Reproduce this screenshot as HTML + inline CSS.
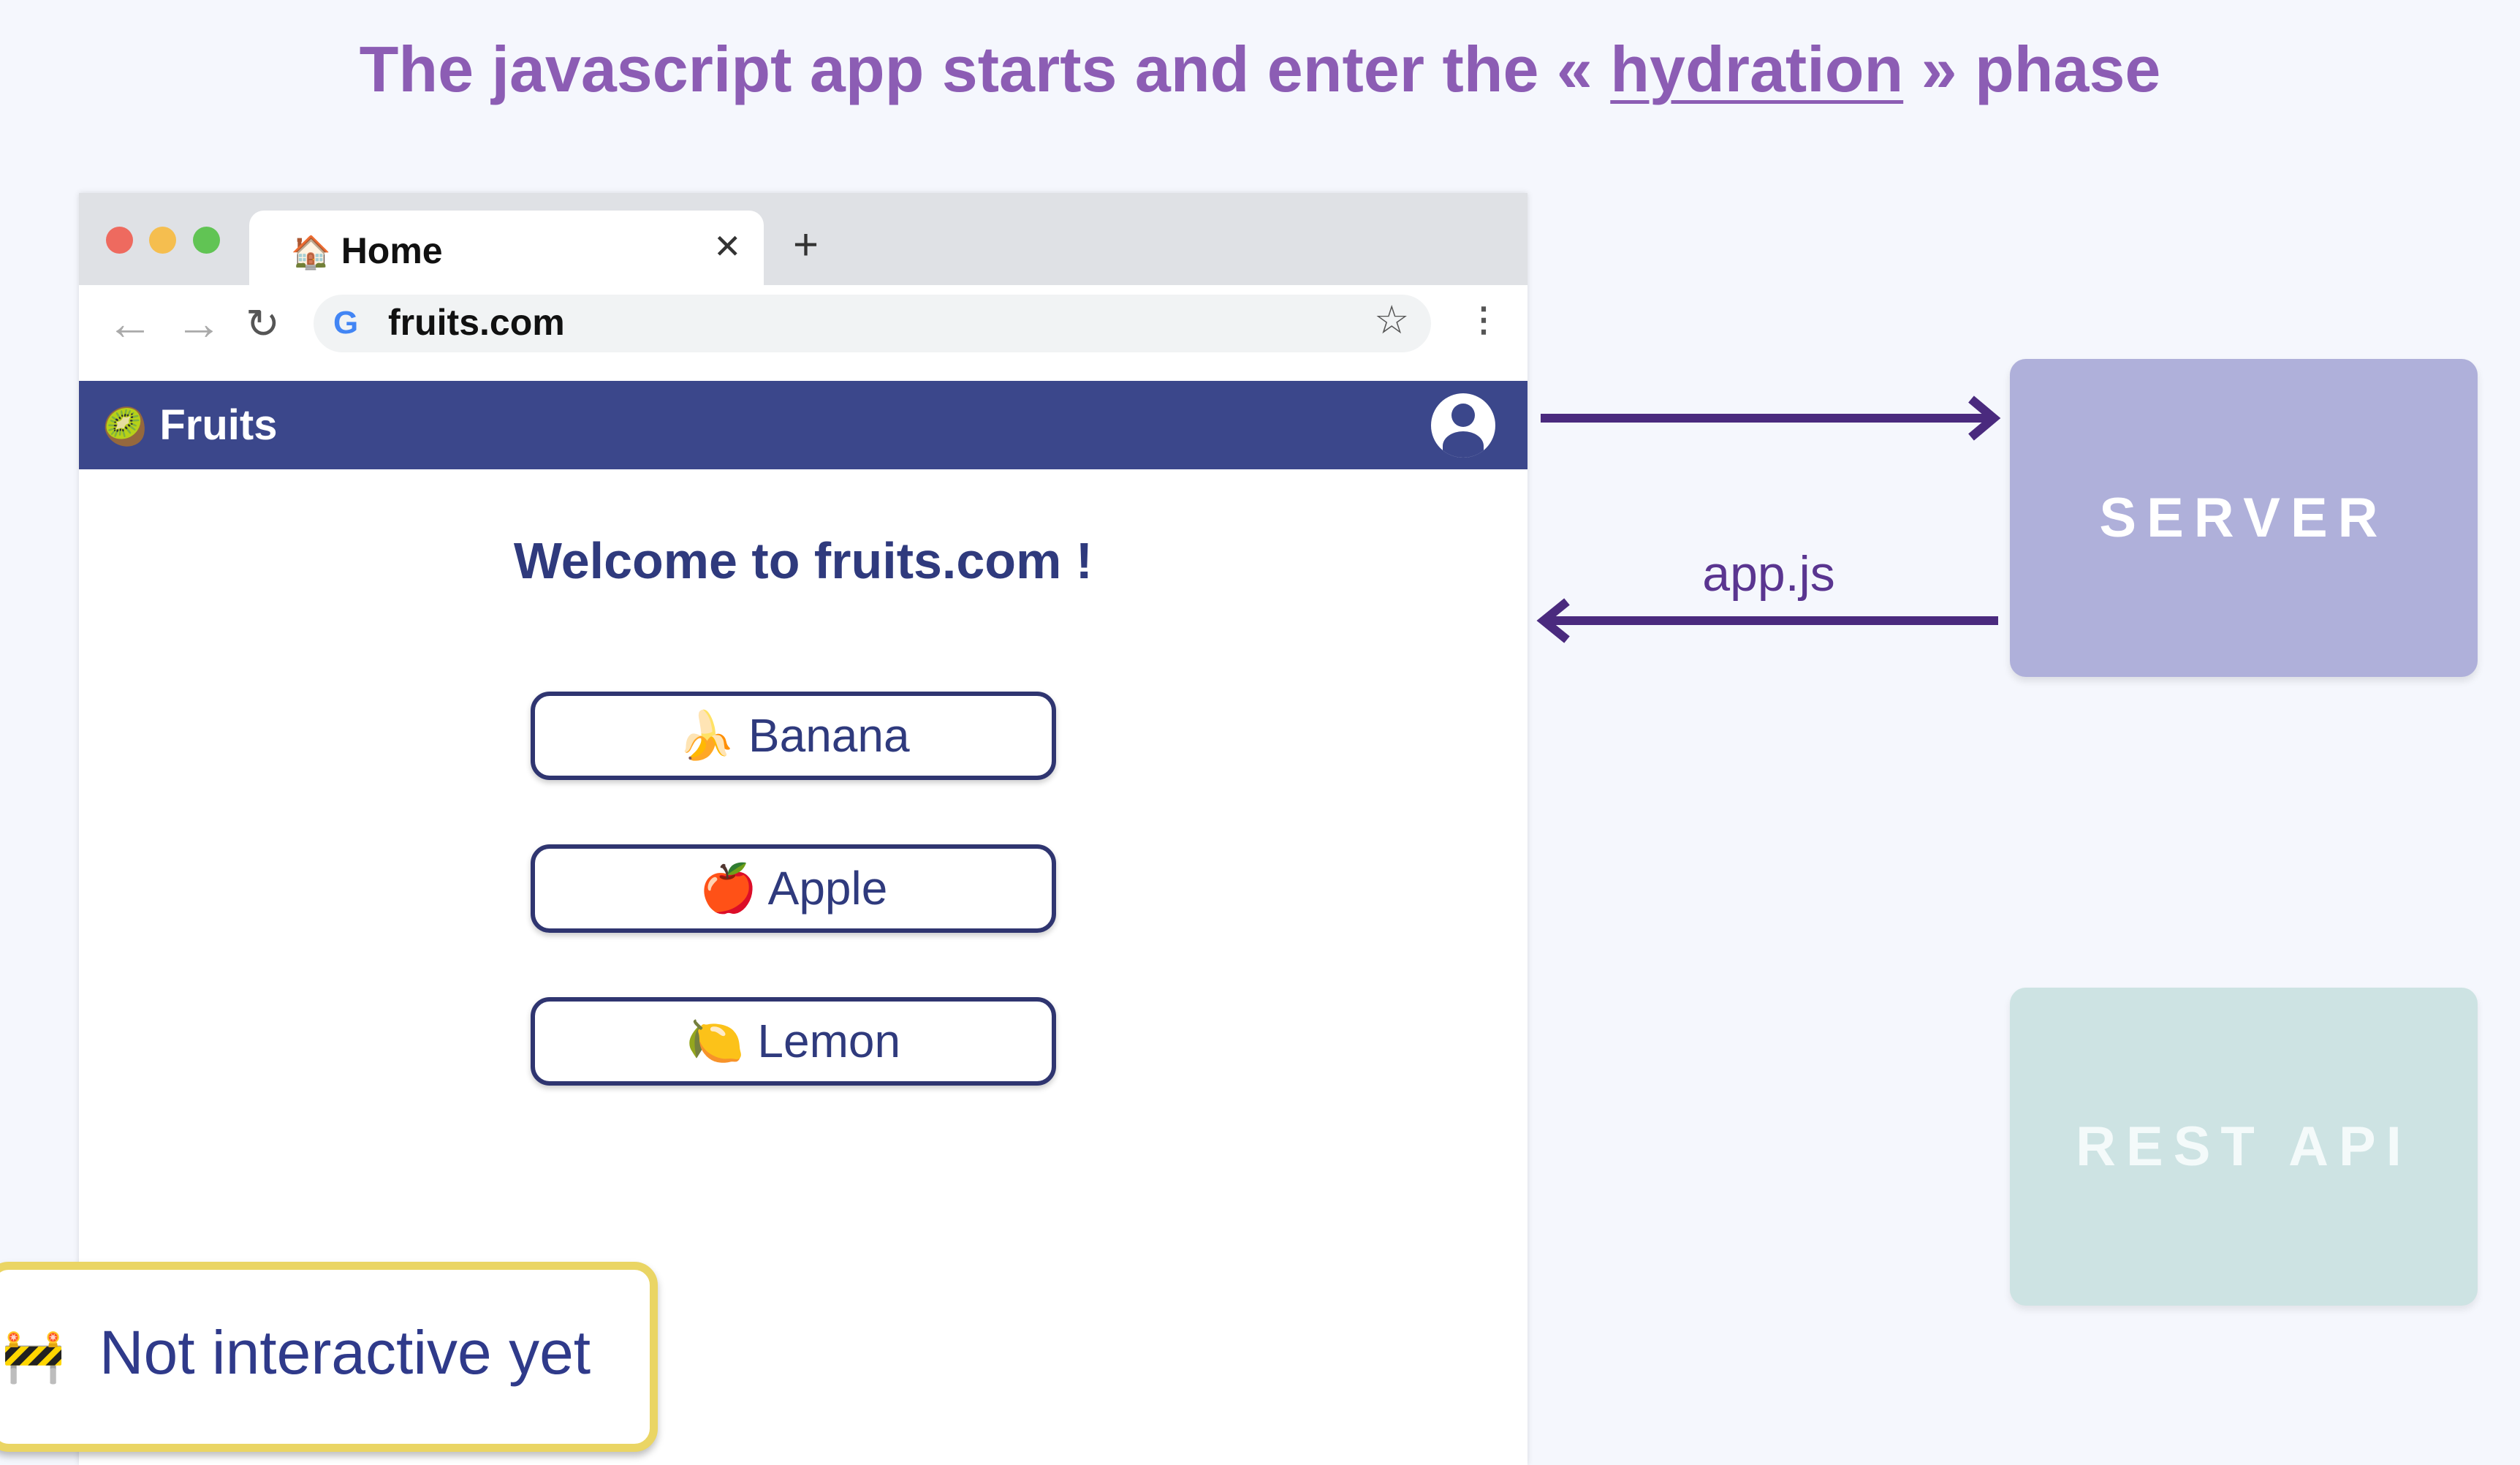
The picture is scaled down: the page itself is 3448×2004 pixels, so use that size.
<!DOCTYPE html>
<html><head><meta charset="utf-8"><style>
*{margin:0;padding:0;box-sizing:border-box}
body{width:3448px;height:1992px;background:#f5f7fd;position:relative;overflow:hidden;font-family:"Liberation Sans",sans-serif}
.a{position:absolute}
</style></head><body>
<div class="a" style="left:0;top:44px;width:3448px;text-align:center;font-size:88px;color:#8c5db4;font-family:'Liberation Sans',sans-serif;font-weight:bold;letter-spacing:0px">The javascript app starts and enter the « <span style="text-decoration:underline;text-decoration-thickness:5px;text-underline-offset:12px">hydration</span> » phase</div>

<div class="a" style="left:108px;top:264px;width:1982px;height:1740px;background:#fff;box-shadow:0 0 8px rgba(0,0,0,.12)"></div>
<div class="a" style="left:108px;top:264px;width:1982px;height:126px;background:#dfe1e5"></div>
<div class="a" style="left:145px;top:310px;width:37px;height:37px;border-radius:50%;background:#ee6a5f"></div>
<div class="a" style="left:204px;top:310px;width:37px;height:37px;border-radius:50%;background:#f5be4f"></div>
<div class="a" style="left:264px;top:310px;width:37px;height:37px;border-radius:50%;background:#61c454"></div>
<div class="a" style="left:341px;top:288px;width:704px;height:110px;background:#fff;border-radius:20px 20px 0 0"></div>
<div class="a" style="left:398px;top:314px;font-size:50px;font-weight:bold;color:#111"><span style="font-size:44px">🏠</span> Home</div>
<div class="a" style="left:976px;top:310px;font-size:46px;color:#333">✕</div>
<div class="a" style="left:1085px;top:300px;font-size:60px;color:#333">+</div>
<div class="a" style="left:146px;top:405px;font-size:64px;color:#aaa">←</div>
<div class="a" style="left:240px;top:405px;font-size:64px;color:#aaa">→</div>
<div class="a" style="left:336px;top:410px;font-size:56px;color:#555">↻</div>
<div class="a" style="left:429px;top:403px;width:1529px;height:79px;background:#f1f3f4;border-radius:40px"></div>
<div class="a" style="left:456px;top:417px;font-size:44px;font-weight:bold;color:#4285f4">G</div>
<div class="a" style="left:531px;top:412px;font-size:50px;font-weight:bold;color:#111">fruits.com</div>
<div class="a" style="left:1880px;top:406px;font-size:54px;color:#555">☆</div>
<div class="a" style="left:2007px;top:410px;font-size:46px;color:#555;font-weight:bold">⋮</div>

<div class="a" style="left:108px;top:521px;width:1982px;height:121px;background:#3b478b"></div>
<div class="a" style="left:140px;top:548px;font-size:58px;font-weight:bold;color:#fff"><span style="font-size:50px">🥝</span> Fruits</div>
<div class="a" style="left:1958px;top:538px;width:88px;height:88px;border-radius:50%;background:#fff;overflow:hidden">
<div class="a" style="left:28px;top:14px;width:32px;height:32px;border-radius:50%;background:#3b478b"></div>
<div class="a" style="left:16px;top:52px;width:56px;height:40px;border-radius:50% 50% 0 0;background:#3b478b"></div></div>

<div class="a" style="left:108px;top:727px;width:1982px;text-align:center;font-size:70px;font-weight:bold;color:#2f3a7d">Welcome to fruits.com !</div>
<div class="a" style="left:726px;top:946px;width:719px;height:121px;border:6px solid #2f3570;border-radius:26px;box-shadow:0 4px 8px rgba(0,0,0,.2);text-align:center;line-height:109px;font-size:64px;color:#2f3a7d">🍌 Banana</div>
<div class="a" style="left:726px;top:1155px;width:719px;height:121px;border:6px solid #2f3570;border-radius:26px;box-shadow:0 4px 8px rgba(0,0,0,.2);text-align:center;line-height:109px;font-size:64px;color:#2f3a7d">🍎 Apple</div>
<div class="a" style="left:726px;top:1364px;width:719px;height:121px;border:6px solid #2f3570;border-radius:26px;box-shadow:0 4px 8px rgba(0,0,0,.2);text-align:center;line-height:109px;font-size:64px;color:#2f3a7d">🍋 Lemon</div>

<div class="a" style="left:-20px;top:1726px;width:920px;height:260px;border:11px solid #ead564;border-radius:32px;background:#fff;box-shadow:0 6px 10px rgba(0,0,0,.25)"></div>
<div class="a" style="left:2px;top:1802px;font-size:84px;color:#2f3a8a"><span style="font-size:70px">🚧</span>&nbsp; Not interactive yet</div>

<svg class="a" style="left:2100px;top:530px" width="660" height="360">
<g stroke="#4a2a7e" stroke-width="12" fill="none">
<line x1="8" y1="42" x2="622" y2="42"/><polyline points="597,16 628,42 597,68"/>
<line x1="20" y1="319" x2="634" y2="319"/><polyline points="44,293 12,319 44,345"/></g></svg>
<div class="a" style="left:2220px;top:746px;width:400px;text-align:center;font-size:68px;color:#5a3590">app.js</div>

<div class="a" style="left:2750px;top:491px;width:640px;height:435px;background:#afb0da;border-radius:22px;box-shadow:0 6px 10px rgba(0,0,0,.1);text-align:center;line-height:435px;color:#fff;font-weight:bold;font-size:76px;letter-spacing:14px">SERVER</div>
<div class="a" style="left:2750px;top:1351px;width:640px;height:435px;background:#cde3e3;border-radius:22px;box-shadow:0 6px 10px rgba(0,0,0,.08);text-align:center;line-height:435px;color:#f4fafa;font-weight:bold;font-size:76px;letter-spacing:14px">REST API</div>
</body></html>
